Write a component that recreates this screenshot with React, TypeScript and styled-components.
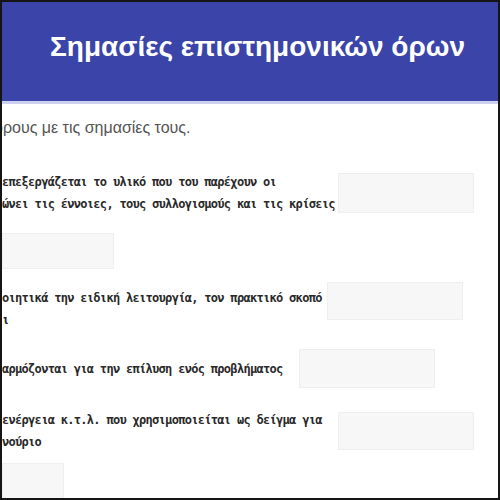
import React from "react";
import styled, { createGlobalStyle } from "styled-components";

const GlobalStyle = createGlobalStyle`
  html, body { margin: 0; padding: 0; background: #fff; }
  body { font-family: "Liberation Sans", Arial, sans-serif; }
`;

const Frame = styled.div`
  width: 500px;
  height: 500px;
  box-sizing: border-box;
  border: 2px solid #151515;
  overflow: hidden;
  background: #fff;
  display: flex;
  flex-direction: column;
`;

const Header = styled.header`
  flex: none;
  height: 99px;
  background: #3b45a9;
  border-bottom: 3px solid #cdd0ee;
  display: flex;
  align-items: center;
  padding-left: 48px;
`;

const Title = styled.h1`
  margin: 0;
  padding-bottom: 9px;
  font-family: "Liberation Sans", Arial, sans-serif;
  font-size: 28px;
  font-weight: 700;
  color: #fff;
  white-space: nowrap;
`;

const Main = styled.main`
  padding-top: 14px;
  display: flex;
  flex-direction: column;
`;

const Intro = styled.p`
  margin: 0 0 0 -8px;
  font-size: 16px;
  line-height: 20px;
  color: #555;
  white-space: nowrap;
`;

const List = styled.div`
  display: flex;
  flex-direction: column;
  gap: 18px;
  margin-top: 33px;
`;

const Row = styled.div<{ $gap: number; $mt?: number }>`
  display: flex;
  align-items: center;
  gap: ${(p) => p.$gap}px;
  ${(p) => (p.$mt !== undefined ? `margin-top: ${p.$mt}px;` : "")}
`;

const Term = styled.div`
  flex: none;
  font-family: "DejaVu Sans Mono", monospace;
  font-weight: 700;
  font-size: 12px;
  letter-spacing: -0.7px;
  line-height: 22px;
  color: #2a2a2a;
  white-space: nowrap;
`;

const Field = styled.div<{ $w?: number; $h?: number; $top?: boolean; $mt?: number }>`
  flex: none;
  box-sizing: border-box;
  width: ${(p) => p.$w ?? 136}px;
  height: ${(p) => p.$h ?? 39}px;
  background: #f7f7f7;
  border: 1px solid #efefef;
  ${(p) => (p.$top ? "align-self: flex-start; margin-top: -5px;" : "")}
  ${(p) => (p.$mt !== undefined ? `margin-top: ${p.$mt}px;` : "")}
`;

export default function App() {
  return (
    <>
      <GlobalStyle />
      <Frame>
        <Header>
          <Title>Σημασίες επιστημονικών όρων</Title>
        </Header>
        <Main>
          <Intro>όρους με τις σημασίες τους.</Intro>
          <List>
            <Row $gap={3}>
              <Term>
                επεξεργάζεται το υλικό που του παρέχουν οι
                <br />
                ώνει τις έννοιες, τους συλλογισμούς και τις κρίσεις
              </Term>
              <Field $h={40} />
            </Row>
            <Field $w={112} $h={36} />
            <Row $gap={5}>
              <Term>
                οιητικά την ειδική λειτουργία, τον πρακτικό σκοπό
                <br />ι
              </Term>
              <Field $h={38} $top />
            </Row>
            <Row $gap={16}>
              <Term>αρμόζονται για την επίλυση ενός προβλήματος</Term>
              <Field />
            </Row>
            <Row $gap={16} $mt={3}>
              <Term>
                {" "}ενέργεια κ.τ.λ. που χρησιμοποιείται ως δείγμα για
                <br />
                νούριο
              </Term>
              <Field $h={38} />
            </Row>
            <Field $w={62} $h={40} $mt={-8} />
          </List>
        </Main>
      </Frame>
    </>
  );
}
